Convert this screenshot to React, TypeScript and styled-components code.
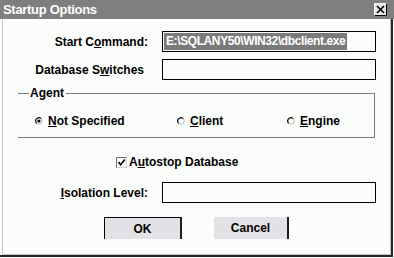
import React from "react";
import styled, { createGlobalStyle } from "styled-components";

const GlobalStyle = createGlobalStyle`
	body {
		margin: 0;
		background: #fbfdfb;
	}
`;

const FONT = `"Liberation Sans", Arial, sans-serif`;

const RadioIcon = ({ checked }: { checked?: boolean }) => (
	<svg width="8" height="8" viewBox="0 0 8 8">
		<circle cx="4" cy="4" r="3.2" fill="#fbfdfb" stroke="#b8b8b8" strokeWidth="1" />
		<path d="M6.3 1.7 A3.2 3.2 0 0 0 1.7 6.3" fill="none" stroke="#202020" strokeWidth="1.2" />
		{checked && <circle cx="4" cy="4" r="1.6" fill="#000" />}
	</svg>
);

const CheckIcon = () => (
	<svg width="11" height="11" viewBox="0 0 11 11">
		<rect x="0.5" y="0.5" width="10" height="10" fill="#fbfdfb" stroke="#d0d0d0" />
		<path d="M0.5 10.5 V0.5 H10.5" fill="none" stroke="#707070" />
		<path d="M2.5 5 L4.6 7.8 L8.8 2.4" fill="none" stroke="#000" strokeWidth="1.6" />
	</svg>
);

const CloseIcon = () => (
	<svg width="9" height="9" viewBox="0 0 9 9">
		<path d="M1 1 L8 8 M8 1 L1 8" stroke="#000" strokeWidth="1.6" />
	</svg>
);

export default function App() {
	return (
		<>
			<GlobalStyle />
			<Window>
				<TitleBar>
					<Title>Startup Options</Title>
					<CloseButton>
						<CloseIcon />
					</CloseButton>
				</TitleBar>
				<Body>
					<Row $top={12}>
						<Label $pr={14}>
							Start C<U>o</U>mmand:
						</Label>
						<Field>
							<Selection>E:\SQLANY50\WIN32\dbclient.exe</Selection>
						</Field>
					</Row>
					<Row $top={7}>
						<Label $pr={18}>
							Database S<U>w</U>itches
						</Label>
						<Field />
					</Row>
					<Group>
						<Legend>Agent</Legend>
						<Radios>
							<RadioItem>
								<RadioIcon checked />
								<span>
									<U>N</U>ot Specified
								</span>
							</RadioItem>
							<RadioItem>
								<RadioIcon />
								<span>
									<U>C</U>lient
								</span>
							</RadioItem>
							<RadioItem>
								<RadioIcon />
								<span>
									<U>E</U>ngine
								</span>
							</RadioItem>
						</Radios>
					</Group>
					<CheckRow>
						<CheckIcon />
						<span>
							A<U>u</U>tostop Database
						</span>
					</CheckRow>
					<Row $top={13}>
						<Label $pr={14}>
							<U>I</U>solation Level:
						</Label>
						<Field />
					</Row>
					<Buttons>
						<Button $default>OK</Button>
						<Button>Cancel</Button>
					</Buttons>
				</Body>
			</Window>
		</>
	);
}

const Window = styled.div`
	width: 394px;
	height: 258px;
	display: flex;
	flex-direction: column;
	font-family: ${FONT};
	font-size: 12px;
	font-weight: 700;
	color: #000;
`;

const TitleBar = styled.div`
	height: 19px;
	flex-shrink: 0;
	background: #7f7f7f;
	display: flex;
	align-items: center;
	justify-content: space-between;
	padding: 0 4px 0 3px;
	box-sizing: border-box;
`;

const Title = styled.span`
	color: #ffffff;
	font-size: 13px;
	font-weight: 700;
	letter-spacing: -0.3px;
`;

const CloseButton = styled.div`
	width: 13px;
	height: 13px;
	box-sizing: border-box;
	margin-right: 3px;
	background: #e6e6e6;
	border: 1px solid;
	border-color: #ffffff #000000 #000000 #ffffff;
	display: flex;
	align-items: center;
	justify-content: center;
`;

const Body = styled.div`
	width: 393px;
	height: 238px;
	box-sizing: border-box;
	background: #fbfdfb;
	border-right: 2px solid #262626;
	border-bottom: 2px solid #262626;
	box-shadow: inset 2px 0 0 #fbfdfb, inset 3px 0 0 #c8c8c8, inset -1px 0 0 #bcbcbc,
		inset 0 -1px 0 #bcbcbc;
	display: flex;
	flex-direction: column;
`;

const Row = styled.div<{ $top: number }>`
	display: flex;
	align-items: center;
	margin-top: ${(p) => p.$top}px;
`;

const Label = styled.div<{ $pr: number }>`
	width: 162px;
	box-sizing: border-box;
	padding-right: ${(p) => p.$pr}px;
	text-align: right;
	line-height: 14px;
	white-space: nowrap;
`;

const U = styled.span`
	text-decoration: underline;
`;

const Field = styled.div`
	width: 214px;
	height: 21px;
	box-sizing: border-box;
	border: 1px solid #000;
	background: #fbfdfb;
	display: flex;
	align-items: center;
	padding: 0 1px;
`;

const Selection = styled.span`
	background: #7a7a7a;
	color: #ffffff;
	height: 17px;
	line-height: 17px;
	padding: 0 2px;
	letter-spacing: -0.4px;
	white-space: nowrap;
`;

const Group = styled.fieldset`
	width: 357px;
	box-sizing: border-box;
	margin: 6px 0 0 18px;
	padding: 14px 0 9px 0;
	border: 1px solid #7a7a7a;
	border-left: none;
	min-inline-size: 0;
`;

const Legend = styled.legend`
	margin-left: 11px;
	padding: 0 2px 0 1px;
	line-height: 14px;
	font-weight: 700;
`;

const Radios = styled.div`
	display: grid;
	grid-template-columns: 142px 110px auto;
	padding-left: 17px;
	line-height: 14px;
`;

const RadioItem = styled.div`
	display: flex;
	align-items: center;
	gap: 5px;
`;

const CheckRow = styled.div`
	display: flex;
	align-items: center;
	gap: 2px;
	margin: 17px 0 0 116px;
	line-height: 14px;
`;

const Buttons = styled.div`
	display: flex;
	gap: 32px;
	margin: 14px 0 0 104px;
`;

const Button = styled.div<{ $default?: boolean }>`
	width: ${(p) => (p.$default ? 78 : 75)}px;
	height: 22px;
	box-sizing: border-box;
	background: #e3e1e6;
	border-right: 2px solid #1e1e1e;
	border-top: ${(p) => (p.$default ? "1px solid #000" : "none")};
	border-left: ${(p) => (p.$default ? "1px solid #000" : "none")};
	display: flex;
	align-items: center;
	justify-content: center;
	font-size: 12px;
	font-weight: 700;
`;
